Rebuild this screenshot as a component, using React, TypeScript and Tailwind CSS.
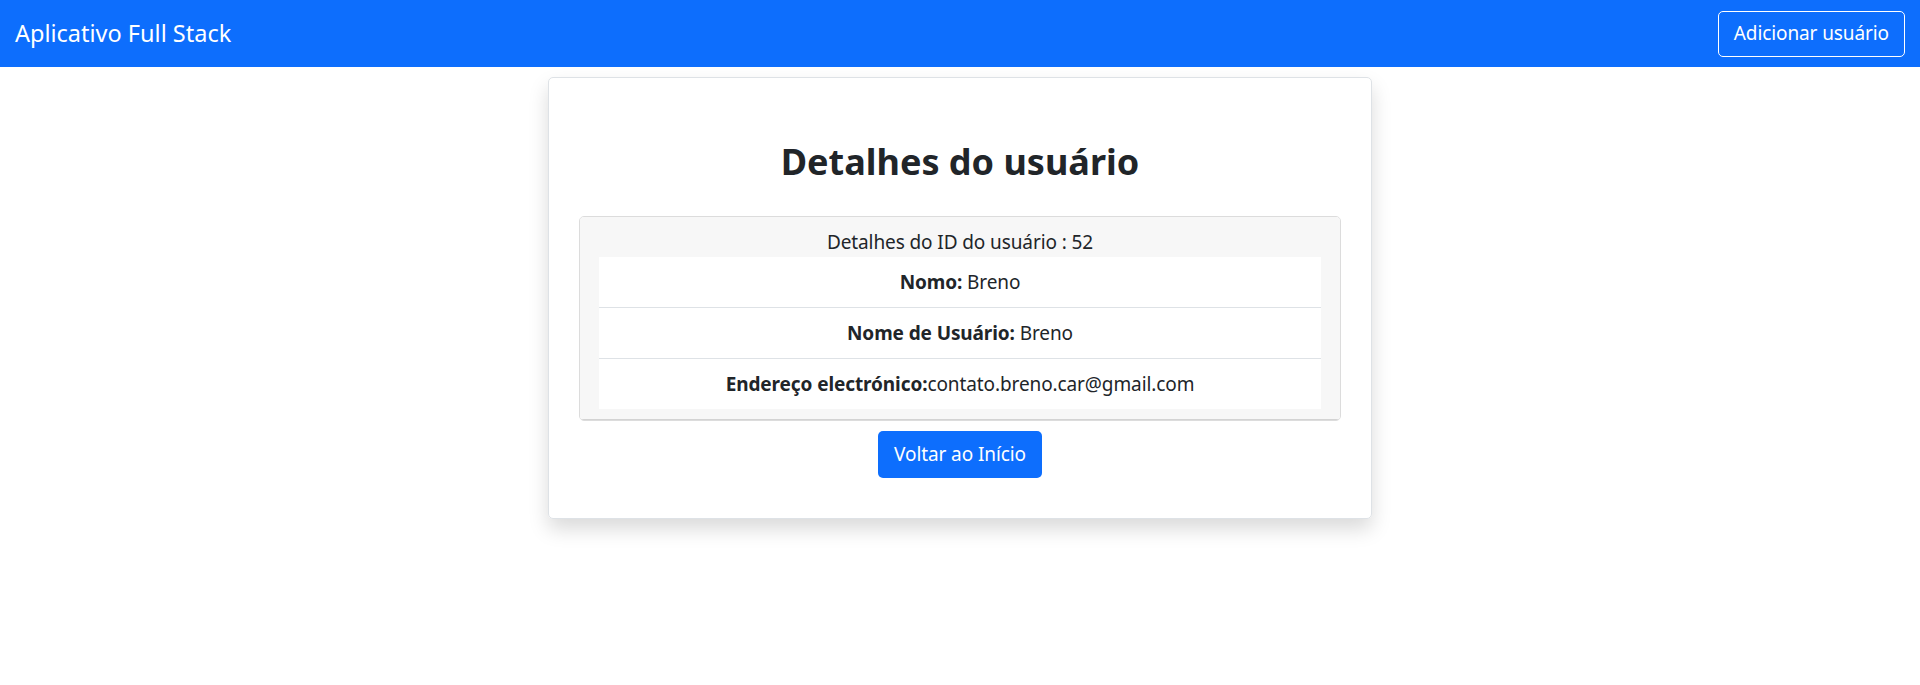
import React from 'react';

const user = {
  id: 52,
  name: 'Breno',
  username: 'Breno',
  email: 'contato.breno.car@gmail.com',
};

export default function App() {
  return (
    <div className="min-h-[685px] bg-white text-[#212529] font-['Noto_Sans',sans-serif]">
      <nav className="h-[67px] bg-[#0d6efd] flex items-center justify-between px-[15px]">
        <a className="text-white text-[23.5px] leading-none" href="#">
          Aplicativo Full Stack
        </a>
        <button className="h-[46px] px-[15px] border border-white rounded-[5px] text-white text-[19px] tracking-[-0.1px]">
          Adicionar usuário
        </button>
      </nav>

      <div className="flex justify-center pt-[10px]">
        <div className="w-[824px] border border-[#dee2e6] rounded-[5px] p-[30px] shadow-[0_10px_20px_rgba(0,0,0,0.15)]">
          <h2 className="text-center text-[36px] font-bold leading-[48px] my-[30px]">
            Detalhes do usuário
          </h2>

          <div className="border border-[#dcdcdc] rounded-[5px] overflow-hidden">
            <div className="bg-[#f7f7f7] px-[19px] py-[10px] border-b border-[#d3d3d3]">
              <div className="text-center text-[19px] leading-[30px] tracking-[-0.1px]">
                Detalhes do ID do usuário : {user.id}
              </div>
              <ul className="bg-white text-[19px] tracking-[-0.1px]">
                <li className="text-center leading-[30px] py-[10px] border-b border-[#dee2e6]">
                  <b>Nomo:</b> {user.name}
                </li>
                <li className="text-center leading-[30px] py-[10px] border-b border-[#dee2e6]">
                  <b>Nome de Usuário:</b> {user.username}
                </li>
                <li className="text-center leading-[30px] py-[10px]">
                  <b>Endereço electrónico:</b>
                  {user.email}
                </li>
              </ul>
            </div>
          </div>

          <div className="flex justify-center my-[10px]">
            <button className="h-[47px] px-[16px] bg-[#0d6efd] rounded-[5px] text-white text-[19px] tracking-[-0.1px]">
              Voltar ao Início
            </button>
          </div>
        </div>
      </div>
    </div>
  );
}
